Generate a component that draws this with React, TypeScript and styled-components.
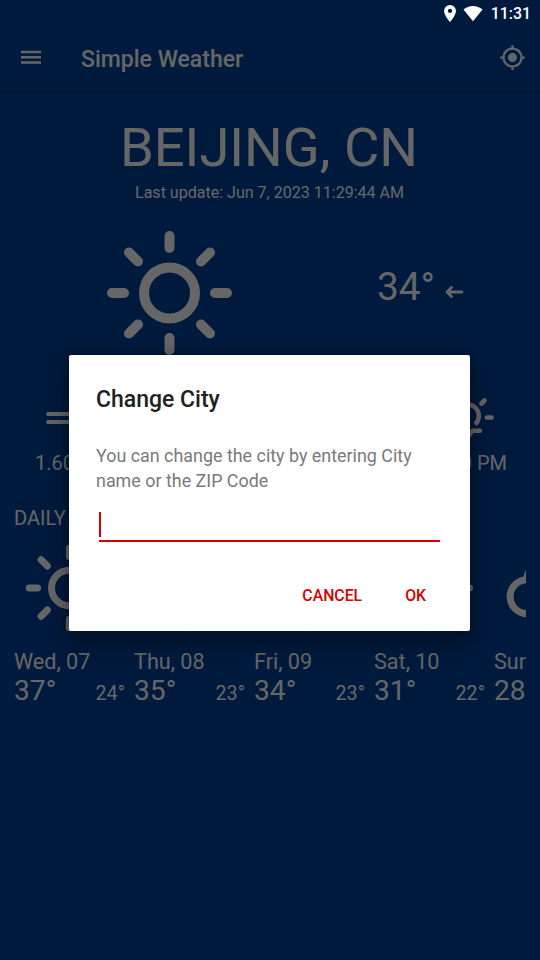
import React from "react";
import styled, { createGlobalStyle } from "styled-components";

const Global = createGlobalStyle`
  * { box-sizing: border-box; }
  html, body { margin: 0; padding: 0; }
  body { font-family: Roboto, sans-serif; background: #004299; }
`;

const Screen = styled.div`
  position: relative;
  width: 540px;
  height: 960px;
  overflow: hidden;
  display: flex;
  flex-direction: column;
  background: #004299;
  color: #fff;
`;

const StatusBar = styled.div`
  position: absolute;
  z-index: 3;
  top: 0;
  right: 9px;
  height: 27px;
  display: flex;
  align-items: center;
  color: #fff;
`;

const StatusIcons = styled.div`
  display: flex;
  gap: 7.5px;
`;

const Clock = styled.span`
  margin-left: 7.5px;
  font-size: 15.9px;
  font-weight: 500;
  line-height: 27px;
`;

const Toolbar = styled.header`
  flex: none;
  height: 90px;
  padding: 27px 14px 0 18px;
  display: flex;
  align-items: center;
  box-shadow: 0 1px 4px rgba(0, 0, 0, 0.35);
  svg { margin-bottom: 2px; }
`;

const AppTitle = styled.h1`
  margin: 0 auto 0 36px;
  padding-top: 2px;
  font-size: 23px;
  line-height: 28px;
  font-weight: 500;
`;

const City = styled.h2`
  margin: 25px 0 0;
  padding-right: 2px;
  font-size: 54.3px;
  line-height: 66px;
  font-weight: 400;
  text-align: center;
`;

const Updated = styled.p`
  margin: 2px 0 0;
  padding-right: 1px;
  font-size: 16.05px;
  line-height: 19px;
  text-align: center;
`;

const Current = styled.section`
  margin-top: 28px;
  height: 126px;
  padding: 0 76px 0 106px;
  display: flex;
  justify-content: space-between;
`;

const Reading = styled.div`
  display: flex;
  align-items: center;
  gap: 10px;
  height: 112px;
  font-size: 38.8px;
`;

const ArrowBox = styled.span`
  display: flex;
  margin-top: 12px;
`;

const Details = styled.section`
  margin-top: 38px;
  padding: 0 33px 0 35px;
  display: flex;
  justify-content: space-between;
`;

const Detail = styled.div<{ $end?: boolean }>`
  display: flex;
  flex-direction: column;
  align-items: ${(p) => (p.$end ? "flex-end" : "flex-start")};
  font-size: 20px;
  line-height: 24px;
  svg { margin: ${(p) => (p.$end ? "0 11px 7px 0" : "0 0 7px 8px")}; }
`;

const SectionLabel = styled.h3`
  margin: 31px 0 0 14px;
  font-size: 20px;
  line-height: 24px;
  font-weight: 400;
`;

const Forecast = styled.section`
  margin: 14px 14px 0;
  display: flex;
  overflow: hidden;
`;

const Day = styled.article`
  flex: 0 0 120px;
  svg { display: block; margin-left: 11px; }
`;

const DayName = styled.div`
  margin-top: 17px;
  font-size: 21.6px;
  line-height: 26px;
  white-space: nowrap;
`;

const Temps = styled.div`
  display: flex;
  justify-content: space-between;
  align-items: baseline;
  padding-right: 9px;
  line-height: 32px;
`;

const High = styled.span`
  font-size: 28.2px;
`;

const Low = styled.span`
  font-size: 19.7px;
`;

const Scrim = styled.div`
  position: absolute;
  z-index: 1;
  inset: 0;
  background: rgba(0, 0, 0, 0.6);
`;

const Dialog = styled.div`
  position: absolute;
  z-index: 2;
  top: 355px;
  left: 69px;
  width: 401px;
  height: 276px;
  padding: 31px 30px 0 27px;
  border-radius: 2px;
  background: #fff;
  box-shadow: 0 14px 24px rgba(0, 0, 0, 0.3), 0 0 16px rgba(0, 0, 0, 0.28);
`;

const DialogTitle = styled.h2`
  margin: 0;
  color: #212121;
  font-size: 23px;
  line-height: 28px;
  font-weight: 500;
`;

const Message = styled.p`
  margin: 29px 0 0;
  color: #7a7a7a;
  font-size: 17.9px;
  line-height: 25px;
`;

const Field = styled.div`
  margin: 19px 0 0 3px;
  height: 30px;
  border-bottom: 2px solid #d50000;
`;

const Caret = styled.div`
  width: 2px;
  height: 25px;
  background: #d50000;
`;

const Actions = styled.div`
  margin-top: 44px;
  padding-right: 14px;
  display: flex;
  justify-content: flex-end;
  gap: 43px;
`;

const Action = styled.button`
  border: 0;
  padding: 0;
  background: none;
  color: #d50000;
  font: 500 15.8px/20px Roboto, sans-serif;
`;

const Sun = ({ size }: { size: number }) => (
  <svg width={size} height={size} viewBox="-0.500 0 126 126" fill="none" stroke="currentColor" strokeWidth="10" strokeLinecap="round">
    <circle cx="63" cy="63" r="25.5" />
    <path d="M63 6v12M63 108v12M5.500 63h12M108.500 63h12M22.500 22.500l9 9M94.500 94.500l9 9M103.500 22.500l-9 9M31.500 94.500l-9 9" />
  </svg>
);

const CloudSun = () => (
  <svg width="88" height="88" viewBox="-0.700 0 88 88" fill="none" stroke="currentColor" strokeWidth="7" strokeLinecap="round">
    <path d="M22.200 69.700a17 17 0 0 1-1.500-34C23 22 33 14 44 14s20 7 22 21.700a17 17 0 0 1 0 34z" />
  </svg>
);

const Menu = () => (
  <svg width="27" height="27" viewBox="0 0 27 27" stroke="currentColor" strokeWidth="2.500">
    <path d="M3 8.100h20M3 13.300h20M3 18.400h20" />
  </svg>
);

const Locate = () => (
  <svg width="27" height="27" viewBox="0 0 24 24" fill="currentColor">
    <path d="M12 8a4 4 0 1 0 0 8 4 4 0 0 0 0-8zm8.940 3A8.990 8.990 0 0 0 13 3.060V1h-2v2.060A8.990 8.990 0 0 0 3.060 11H1v2h2.060A8.990 8.990 0 0 0 11 20.940V23h2v-2.060A8.990 8.990 0 0 0 20.940 13H23v-2h-2.060zM12 19a7 7 0 1 1 0-14 7 7 0 0 1 0 14z" />
  </svg>
);

const Pin = () => (
  <svg width="12" height="17" viewBox="5 2 14 20" fill="currentColor">
    <path d="M12 2a7 7 0 0 0-7 7c0 5.250 7 13 7 13s7-7.750 7-13a7 7 0 0 0-7-7zm0 9.500a2.500 2.500 0 1 1 0-5 2.500 2.500 0 0 1 0 5z" />
  </svg>
);

const Wifi = () => (
  <svg width="20" height="17" viewBox="0 0 20 17" fill="currentColor">
    <path d="M.5 4.500C6-.3 14-.3 19.500 4.500L10 16.200z" />
  </svg>
);

const Arrow = () => (
  <svg width="19" height="14" viewBox="0 0 19 14" fill="none" stroke="currentColor" strokeWidth="2.800" strokeLinecap="round" strokeLinejoin="round">
    <path d="M17 7H2.500M6.500 2.500L2 7l4.500 4.500" />
  </svg>
);

const Wind = () => (
  <svg width="60" height="50" viewBox="0 0 60 50" fill="none" stroke="currentColor" strokeWidth="4" strokeLinecap="round">
    <path d="M5 20h42a6 6 0 1 0-6-6M5 28h32a6 6 0 1 1-6 6" />
  </svg>
);

const Sunset = () => (
  <svg width="56" height="50" viewBox="0 0 56 50" fill="none" stroke="currentColor" strokeWidth="4.600" strokeLinecap="round">
    <path d="M20 30.300a11.300 11.300 0 1 1 15 0" strokeLinecap="butt" />
    <path d="M46.800 23.500h4.800M41.500 9.500l3-3M27.500 1.500v4M13.500 9.500l-3-3M3.400 23.500h4.800M14.300 36.700h6.500l6.700 6.700 5.200-6.700h7.200" />
  </svg>
);

const days = [
  { name: "Wed, 07", high: "37°", low: "24°" },
  { name: "Thu, 08", high: "35°", low: "23°" },
  { name: "Fri, 09", high: "34°", low: "23°" },
  { name: "Sat, 10", high: "31°", low: "22°" },
  { name: "Sun, 11", high: "28°", low: "20°", cloudy: true },
];

export default function App() {
  return (
    <Screen>
      <Global />
      <StatusBar>
        <StatusIcons>
          <Pin />
          <Wifi />
        </StatusIcons>
        <Clock>11:31</Clock>
      </StatusBar>
      <Toolbar>
        <Menu />
        <AppTitle>Simple Weather</AppTitle>
        <Locate />
      </Toolbar>
      <City>BEIJING, CN</City>
      <Updated>Last update: Jun 7, 2023 11:29:44 AM</Updated>
      <Current>
        <Sun size={126} />
        <Reading>
          <span>34°</span>
          <ArrowBox>
            <Arrow />
          </ArrowBox>
        </Reading>
      </Current>
      <Details>
        <Detail>
          <Wind />
          <span>1.60 m/s</span>
        </Detail>
        <Detail $end>
          <Sunset />
          <span>7:40 PM</span>
        </Detail>
      </Details>
      <SectionLabel>DAILY</SectionLabel>
      <Forecast>
        {days.map((d) => (
          <Day key={d.name}>
            {d.cloudy ? <CloudSun /> : <Sun size={88} />}
            <DayName>{d.name}</DayName>
            <Temps>
              <High>{d.high}</High>
              <Low>{d.low}</Low>
            </Temps>
          </Day>
        ))}
      </Forecast>
      <Scrim />
      <Dialog role="dialog">
        <DialogTitle>Change City</DialogTitle>
        <Message>You can change the city by entering City name or the ZIP Code</Message>
        <Field>
          <Caret />
        </Field>
        <Actions>
          <Action>CANCEL</Action>
          <Action>OK</Action>
        </Actions>
      </Dialog>
    </Screen>
  );
}
